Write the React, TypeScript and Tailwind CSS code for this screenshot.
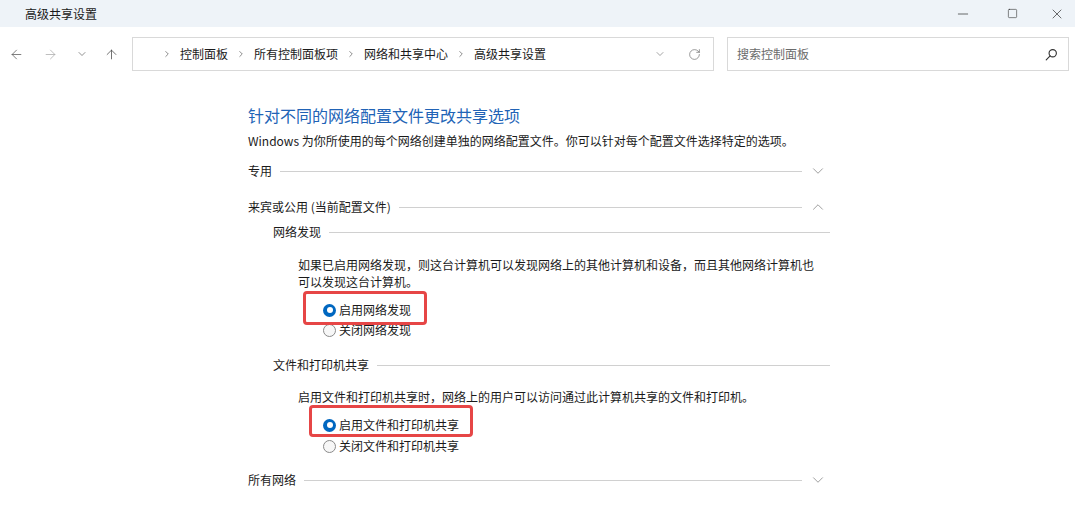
import { ArrowLeft, ArrowRight, ArrowUp, ChevronDown, ChevronUp, ChevronRight, RotateCw, Minus, Square, X } from 'lucide-react';

const font = { fontFamily: '"Noto Sans CJK SC", "Noto Sans", sans-serif' };

function SearchIcon() {
  return (
    <svg width="13" height="13" viewBox="0 0 16 16" fill="none" stroke="#333" strokeWidth="1.4">
      <circle cx="9.5" cy="6.5" r="4.5" />
      <path d="M6.3 9.7 1.5 14.5" strokeLinecap="round" />
    </svg>
  );
}

function Section({ label, open, indent }: { label: string; open?: boolean; indent?: boolean }) {
  return (
    <div className={indent ? 'flex h-[20px] items-center pl-[25px]' : 'flex h-[20px] items-center'}>
      <span className="whitespace-nowrap text-[12px] text-[#1a1a1a]">{label}</span>
      <div className="ml-[8px] h-px flex-1 bg-[#d0d0d0]" />
      {!indent && (
        <div className="flex w-[28px] justify-end pr-[3px]">
          {open ? (
            <ChevronUp size={18} strokeWidth={0.9} color="#707070" />
          ) : (
            <ChevronDown size={18} strokeWidth={0.9} color="#707070" />
          )}
        </div>
      )}
    </div>
  );
}

function Radio({ checked, label }: { checked?: boolean; label: string }) {
  return (
    <div className="flex h-[20px] items-center">
      {checked ? (
        <span className="flex h-[13px] w-[13px] items-center justify-center rounded-full bg-[#0067c0]">
          <span className="h-[6px] w-[6px] rounded-full bg-white" />
        </span>
      ) : (
        <span className="h-[13px] w-[13px] rounded-full border border-[#8a8a8a] bg-[#f7f7f7]" />
      )}
      <span className="ml-[3px] whitespace-nowrap text-[12px] text-[#1a1a1a]">{label}</span>
    </div>
  );
}

function Sep() {
  return (
    <span className="mx-[6px] flex w-[14px] justify-center">
      <ChevronRight size={10} strokeWidth={1.6} color="#555" />
    </span>
  );
}

export default function App() {
  return (
    <div className="h-[513px] w-[1075px] overflow-hidden bg-white" style={font}>
      {/* title bar */}
      <div className="flex h-[27px] items-center bg-[#eef3f8]">
        <span className="pl-[25px] text-[12px] text-[#1a1a1a]">高级共享设置</span>
        <div className="ml-auto flex h-full items-center">
          <div className="flex w-[44px] justify-center"><Minus size={16} strokeWidth={1} color="#222" /></div>
          <div className="flex w-[54px] justify-center"><Square size={11} strokeWidth={1.2} color="#222" /></div>
          <div className="flex w-[36px] justify-center"><X size={16} strokeWidth={1} color="#222" /></div>
        </div>
      </div>

      {/* toolbar */}
      <div className="flex h-[54px] items-start pt-[10px]">
        <div className="flex h-[34px] items-center">
          <div className="flex w-[32px] justify-center"><ArrowLeft size={15} strokeWidth={1.2} color="#555" /></div>
          <div className="flex w-[36px] justify-center"><ArrowRight size={15} strokeWidth={1.2} color="#aaa" /></div>
          <div className="flex w-[28px] justify-center"><ChevronDown size={12} strokeWidth={1.3} color="#555" /></div>
          <div className="flex w-[30px] justify-center"><ArrowUp size={15} strokeWidth={1.2} color="#444" /></div>
        </div>
        <div className="ml-[6px] flex h-[34px] w-[582px] items-center border border-[#d9d9d9] pl-[21px] text-[12px] text-[#1a1a1a]">
          <Sep />
          <span>控制面板</span>
          <Sep />
          <span>所有控制面板项</span>
          <Sep />
          <span>网络和共享中心</span>
          <Sep />
          <span>高级共享设置</span>
          <div className="ml-auto flex items-center">
            <div className="flex w-[30px] justify-center"><ChevronDown size={12} strokeWidth={1.2} color="#666" /></div>
            <div className="ml-[9px] mr-[9px] flex w-[20px] justify-center"><RotateCw size={13} strokeWidth={1.2} color="#666" /></div>
          </div>
        </div>
        <div className="ml-[13px] flex h-[34px] w-[342px] items-center border border-[#d9d9d9] pl-[9px] pr-[10px]">
          <span className="text-[12px] text-[#6b6b6b]">搜索控制面板</span>
          <div className="ml-auto"><SearchIcon /></div>
        </div>
      </div>

      {/* content */}
      <div className="ml-[248px] w-[582px] pt-[23px]">
        <div className="flex h-[22px] items-center text-[16px] text-[#2163b6]">针对不同的网络配置文件更改共享选项</div>
        <div className="mt-[6px] flex h-[18px] items-center whitespace-nowrap text-[12px] text-[#1a1a1a]">
          Windows 为你所使用的每个网络创建单独的网络配置文件。你可以针对每个配置文件选择特定的选项。
        </div>
        <div className="mt-[11px]"><Section label="专用" /></div>
        <div className="mt-[16px]"><Section label="来宾或公用 (当前配置文件)" open /></div>

        <div className="mt-[5px]"><Section label="网络发现" indent /></div>
        <div className="ml-[50px] mt-[14px] whitespace-nowrap text-[12px] leading-[17px] text-[#1a1a1a]">
          如果已启用网络发现，则这台计算机可以发现网络上的其他计算机和设备，而且其他网络计算机也
          <br />
          可以发现这台计算机。
        </div>
        <div className="relative ml-[75px] mt-[10px]">
          <Radio checked label="启用网络发现" />
          <Radio label="关闭网络发现" />
          <div className="absolute left-[-20px] top-[-9px] h-[34px] w-[124px] rounded-[4px] border-[3px] border-[#e64646]" />
        </div>

        <div className="mt-[15px]"><Section label="文件和打印机共享" indent /></div>
        <div className="ml-[50px] mt-[13px] flex h-[18px] items-center whitespace-nowrap text-[12px] text-[#1a1a1a]">
          启用文件和打印机共享时，网络上的用户可以访问通过此计算机共享的文件和打印机。
        </div>
        <div className="relative ml-[75px] mt-[9px]">
          <Radio checked label="启用文件和打印机共享" />
          <div className="mt-px"><Radio label="关闭文件和打印机共享" /></div>
          <div className="absolute left-[-14px] top-[-10px] h-[32px] w-[164px] rounded-[4px] border-[3px] border-[#e64646]" />
        </div>

        <div className="mt-[14px]"><Section label="所有网络" /></div>
      </div>
    </div>
  );
}
